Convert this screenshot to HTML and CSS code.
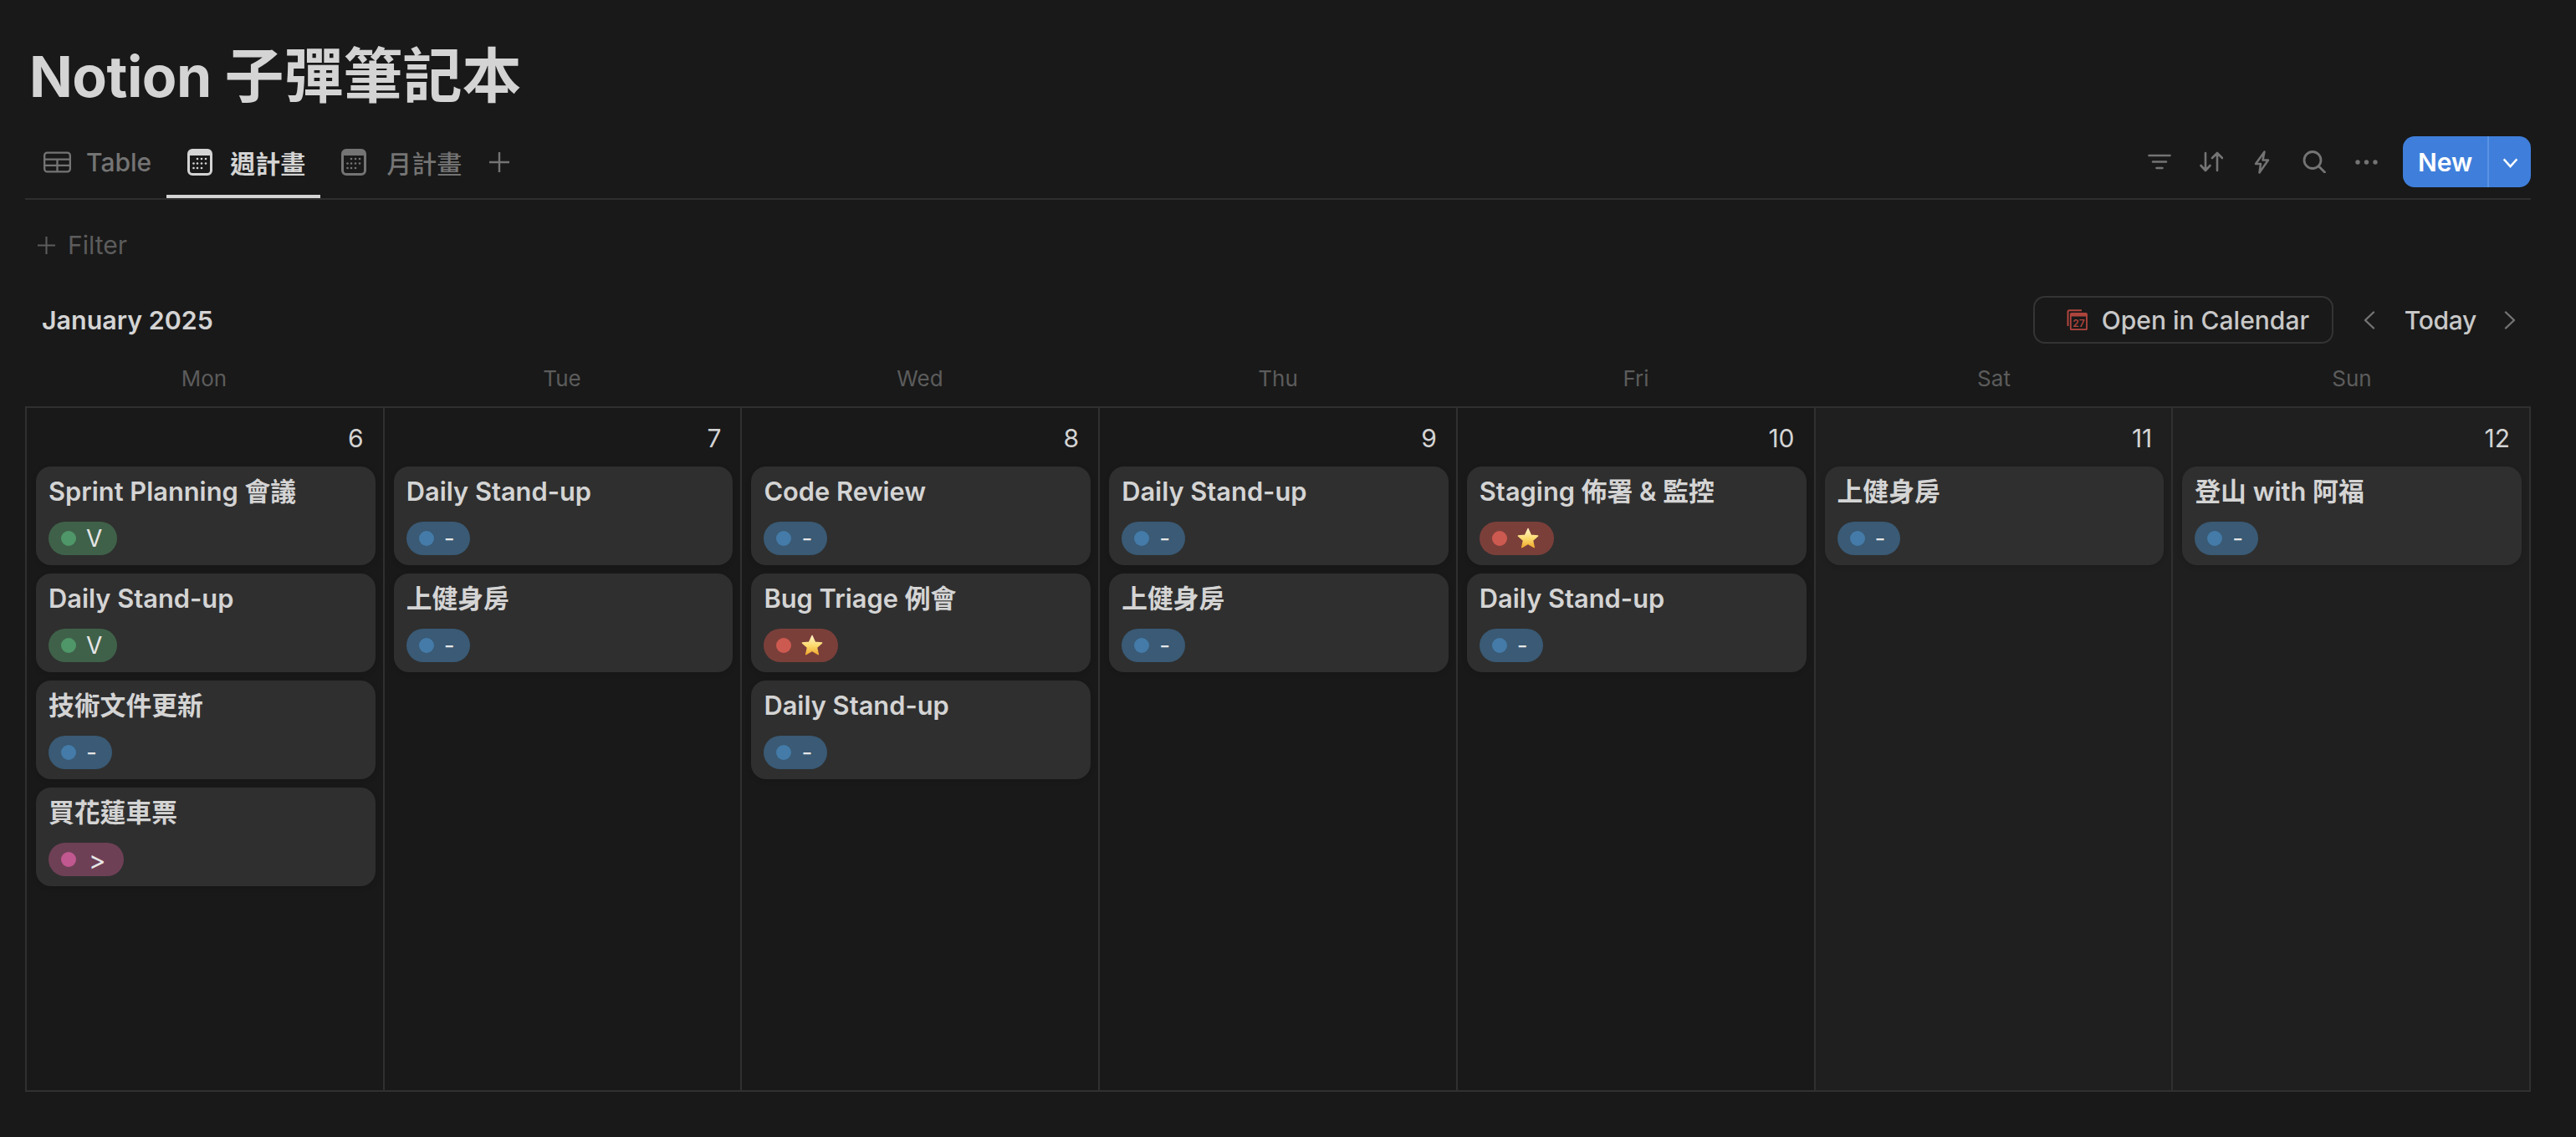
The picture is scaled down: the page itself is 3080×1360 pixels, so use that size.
FILE: index.html
```html
<!DOCTYPE html>
<html lang="zh-Hant">
<head>
<meta charset="utf-8">
<title>Notion 子彈筆記本</title>
<link rel="stylesheet" href="styles.css">
</head>
<body>
<svg width="0" height="0" class="defs">
  <defs>
    <linearGradient id="stargrad" x1="0" y1="0" x2="0" y2="1">
      <stop offset="0" stop-color="#fff3c4"/>
      <stop offset="0.55" stop-color="#fbd96a"/>
      <stop offset="1" stop-color="#f0a830"/>
    </linearGradient>
    <symbol id="star" viewBox="0 0 26 26">
      <path d="M13 1.500l3.400 7.600 8.300.9-6.200 5.500 1.800 8.200L13 19.500l-7.300 4.200 1.800-8.200L1.300 10l8.300-.9z" fill="url(#stargrad)" stroke="url(#stargrad)" stroke-width="1.400" stroke-linejoin="round"/>
    </symbol>
    <symbol id="cal" viewBox="0 0 30 32">
      <path fill-rule="evenodd" d="M6 0h18a6 6 0 0 1 6 6v20a6 6 0 0 1-6 6H6a6 6 0 0 1-6-6V6a6 6 0 0 1 6-6zM3 8v18a3 3 0 0 0 3 3h18a3 3 0 0 0 3-3V8z" fill="currentColor"/>
      <g fill="currentColor">
        <circle cx="12" cy="12" r="1.300"/><circle cx="17" cy="12" r="1.300"/><circle cx="22" cy="12" r="1.300"/>
        <circle cx="7.500" cy="17.500" r="1.300"/><circle cx="12" cy="17.500" r="1.300"/><circle cx="17" cy="17.500" r="1.300"/><circle cx="22" cy="17.500" r="1.300"/>
        <circle cx="7.500" cy="23" r="1.300"/><circle cx="12" cy="23" r="1.300"/><circle cx="17" cy="23" r="1.300"/>
      </g>
    </symbol>
  </defs>
</svg>
<main class="page">
  <h1 class="title">Notion <span class="title-cjk">子彈筆記本</span></h1>

  <nav class="viewbar">
    <div class="tabs">
      <div class="tab tab-table">
        <svg class="ico-table" width="33" height="26" viewBox="0 0 34 26" fill="none" stroke="currentColor" stroke-width="2.400"><rect x="1.200" y="1.200" width="31.600" height="23.600" rx="3.500"/><path d="M1 9.500h32M1 17h32M17 9.500V25"/></svg>
        <span>Table</span>
      </div>
      <div class="tab tab-active">
        <svg width="30" height="32" class="ico-cal"><use href="#cal"/></svg>
        <span>週計畫</span>
      </div>
      <div class="tab tab-month">
        <svg width="30" height="32" class="ico-cal"><use href="#cal"/></svg>
        <span>月計畫</span>
      </div>
      <svg class="tab-add" width="24" height="24" viewBox="0 0 24 24" fill="none" stroke="currentColor" stroke-width="2.400"><path d="M12 0v24M0 12h24"/></svg>
    </div>
    <div class="tools">
      <svg width="28" height="19" viewBox="0 0 28 19" fill="none" stroke="currentColor" stroke-width="2.600" stroke-linecap="round"><path d="M1.500 2h25M6 9.500h16M10.500 17h7"/></svg>
      <svg class="tool-sort" width="28" height="25" viewBox="0 0 28 25" fill="none" stroke="currentColor" stroke-width="2.600" stroke-linecap="round" stroke-linejoin="round"><path d="M7 2v21M1.500 17L7 23l5.500-6M21 23V2M15 8l6-6 6 6"/></svg>
      <svg class="tool-bolt" width="19" height="28" viewBox="0 0 19 28" fill="none" stroke="currentColor" stroke-width="2.500" stroke-linejoin="round"><path d="M12.500 1.500L2 16h6L6.500 26.500 17 11.500h-6.500z"/></svg>
      <svg class="tool-search" width="28" height="27" viewBox="0 0 28 27" fill="none" stroke="currentColor" stroke-width="2.800" stroke-linecap="round"><circle cx="12" cy="11.500" r="10"/><path d="M19.500 19l7 7"/></svg>
      <svg class="tool-dots" width="27" height="6" viewBox="0 0 27 6" fill="currentColor"><circle cx="3" cy="3" r="2.700"/><circle cx="13.500" cy="3" r="2.700"/><circle cx="24" cy="3" r="2.700"/></svg>
      <div class="newbtn">
        <span class="new-label">New</span>
        <span class="new-arrow"><svg width="19" height="12" viewBox="0 0 20 13" fill="none" stroke="#fff" stroke-width="2.600"><path d="M1.500 1.500L10 11l8.500-9.500"/></svg></span>
      </div>
    </div>
  </nav>

  <div class="filter">
    <svg width="21" height="21" viewBox="0 0 22 22" fill="none" stroke="currentColor" stroke-width="2.200"><path d="M11 0v22M0 11h22"/></svg>
    <span>Filter</span>
  </div>

  <header class="calhead">
    <div class="month">January 2025</div>
    <div class="calnav">
      <div class="opencal">
        <svg class="gcal" width="25" height="25" viewBox="0 0 25 25" fill="none" stroke="#b0453e"><path d="M1.500 20V2.800A1.500 1.500 0 0 1 3 1.300h15" stroke-width="2"/><rect x="4.800" y="4.800" width="19.200" height="19.400" rx="1" stroke-width="1.800"/><path d="M4.800 6.800h19.200" stroke-width="3.400"/><text x="14.400" y="21" text-anchor="middle" class="gcal-num">27</text></svg>
        <span>Open in Calendar</span>
      </div>
      <svg class="chev chev-prev" width="14" height="22" viewBox="0 0 14 22" fill="none" stroke="currentColor" stroke-width="2.400" stroke-linecap="round" stroke-linejoin="round"><path d="M12 1.500L2 11l10 9.500"/></svg>
      <span class="today">Today</span>
      <svg class="chev chev-next" width="14" height="22" viewBox="0 0 14 22" fill="none" stroke="currentColor" stroke-width="2.400" stroke-linecap="round" stroke-linejoin="round"><path d="M2 1.500L12 11 2 20.500"/></svg>
    </div>
  </header>

  <div class="weekdays">
    <div>Mon</div><div>Tue</div><div>Wed</div><div>Thu</div><div>Fri</div><div>Sat</div><div>Sun</div>
  </div>

  <section class="grid">
    <div class="cell">
      <div class="date">6</div>
      <article class="card"><div class="card-title">Sprint Planning 會議</div><span class="pill green"><i></i>V</span></article>
      <article class="card"><div class="card-title">Daily Stand-up</div><span class="pill green"><i></i>V</span></article>
      <article class="card"><div class="card-title">技術文件更新</div><span class="pill blue"><i></i>-</span></article>
      <article class="card"><div class="card-title">買花蓮車票</div><span class="pill pink"><i></i>&gt;</span></article>
    </div>
    <div class="cell">
      <div class="date">7</div>
      <article class="card"><div class="card-title">Daily Stand-up</div><span class="pill blue"><i></i>-</span></article>
      <article class="card"><div class="card-title">上健身房</div><span class="pill blue"><i></i>-</span></article>
    </div>
    <div class="cell">
      <div class="date">8</div>
      <article class="card"><div class="card-title">Code Review</div><span class="pill blue"><i></i>-</span></article>
      <article class="card"><div class="card-title">Bug Triage 例會</div><span class="pill red"><i></i><svg width="26" height="26"><use href="#star"/></svg></span></article>
      <article class="card"><div class="card-title">Daily Stand-up</div><span class="pill blue"><i></i>-</span></article>
    </div>
    <div class="cell">
      <div class="date">9</div>
      <article class="card"><div class="card-title">Daily Stand-up</div><span class="pill blue"><i></i>-</span></article>
      <article class="card"><div class="card-title">上健身房</div><span class="pill blue"><i></i>-</span></article>
    </div>
    <div class="cell">
      <div class="date">10</div>
      <article class="card"><div class="card-title">Staging 佈署 &amp; 監控</div><span class="pill red"><i></i><svg width="26" height="26"><use href="#star"/></svg></span></article>
      <article class="card"><div class="card-title">Daily Stand-up</div><span class="pill blue"><i></i>-</span></article>
    </div>
    <div class="cell weekend">
      <div class="date">11</div>
      <article class="card"><div class="card-title">上健身房</div><span class="pill blue"><i></i>-</span></article>
    </div>
    <div class="cell weekend">
      <div class="date">12</div>
      <article class="card"><div class="card-title">登山 with 阿福</div><span class="pill blue"><i></i>-</span></article>
    </div>
  </section>
</main>
</body>
</html>
```
FILE: styles.css
```css
* { box-sizing: border-box; }
html, body { margin: 0; height: 100%; }
body {
  background: #191919;
  color: #d4d4d4;
  font-family: Inter, "Noto Sans CJK TC", sans-serif;
  overflow: hidden;
}
.defs { position: absolute; }
.page { padding: 48px 54px 0 30px; }
.title {
  margin: 0 0 0 5px;
  height: 84px;
  font-size: 68px;
  line-height: 84px;
  font-weight: 700;
  letter-spacing: -0.5px;
  color: #d4d4d4;
}
.title-cjk { font-size: 71px; letter-spacing: 0; }
.viewbar {
  margin-top: 27px;
  height: 80px;
  display: flex;
  justify-content: space-between;
  border-bottom: 2px solid #2e2e2e;
}
.tabs { display: flex; align-items: stretch; }
.tab {
  display: flex;
  align-items: center;
  font-size: 30px;
  font-weight: 500;
  color: #747474;
  height: 78px;
}
.tab-table { padding: 0 18px 8px 22px; gap: 18px; }
.tab-active { padding: 0 18px 8px 25px; gap: 21px; color: #d4d4d4; box-shadow: inset 0 -4px 0 #d4d4d4; font-weight: 600; }
.tab-month { padding: 0 33px 8px 25px; gap: 24px; }
.ico-cal { display: block; }
.tab-add { color: #747474; align-self: center; margin-bottom: 8px; }
.tools {
  display: flex;
  align-items: center;
  padding-bottom: 9px;
  gap: 34px;
  color: #747474;
}
.tool-sort { margin-right: 3px; }
.tool-bolt { margin-right: 5px; }
.tool-search { margin-right: 1px; }
.tool-dots { margin-right: -4px; }
.newbtn {
  display: flex;
  width: 153px;
  height: 61px;
  background: #3f7fdb;
  border-radius: 14px;
  color: #fff;
  font-size: 30px;
  font-weight: 600;
}
.new-label { width: 101px; display: flex; align-items: center; justify-content: center; }
.new-arrow { flex: 1; display: flex; align-items: center; justify-content: center; border-left: 2px solid #5b92e2; padding-top: 3px; }
.filter {
  height: 108px;
  padding: 0 0 0 15px;
  display: flex;
  align-items: center;
  gap: 15px;
  font-size: 30px;
  color: #5c5c5c;
}
.calhead {
  margin-top: -2px;
  height: 75px;
  display: flex;
  align-items: center;
  justify-content: space-between;
}
.month { margin-left: 20px; font-size: 30.400px; font-weight: 600; color: #d4d4d4; }
.calnav { display: flex; align-items: center; color: #747474; }
.opencal {
  width: 359px;
  height: 57px;
  border: 2px solid #343434;
  border-radius: 14px;
  padding-left: 38px;
  display: flex;
  align-items: center;
  gap: 17px;
  font-size: 30px;
  font-weight: 500;
  color: #c8c8c8;
}
.gcal-num { font-size: 12px; font-weight: 600; fill: #b0453e; stroke: none; }
.chev-prev { margin-left: 36px; }
.chev-next { margin-right: 18px; }
.today { margin: 0 33px 0 35px; font-size: 30px; font-weight: 500; letter-spacing: -0.3px; color: #c8c8c8; }
.weekdays {
  height: 66px;
  display: grid;
  grid-template-columns: repeat(7, 1fr);
  align-items: center;
  text-align: center;
  font-size: 26px;
  color: #5c5c5c;
  padding-bottom: 2px;
}
.grid {
  height: 820px;
  display: grid;
  grid-template-columns: repeat(7, 1fr);
  border-top: 2px solid #303030;
  border-bottom: 2px solid #303030;
  border-right: 2px solid #303030;
}
.cell {
  border-left: 2px solid #303030;
  padding: 0 9px 0 11px;
  display: flex;
  flex-direction: column;
  gap: 10px;
}
.weekend { background: #1f1f1f; }
.date {
  height: 60px;
  padding: 18px 14px 0 0;
  line-height: 36px;
  text-align: right;
  font-size: 30px;
  color: #d4d4d4;
}
.card {
  height: 118px;
  padding: 12px 15px;
  background: #2f2f2f;
  border-radius: 18px;
  box-shadow: 0 2px 6px rgba(0,0,0,.12);
}
.card-title {
  height: 36px;
  line-height: 36px;
  margin-bottom: 18px;
  font-size: 30.800px;
  font-weight: 600;
  color: #d4d4d4;
  white-space: nowrap;
  overflow: hidden;
}
.pill {
  display: inline-flex;
  align-items: center;
  height: 40px;
  padding: 0 18px 0 15px;
  gap: 12px;
  border-radius: 20px;
  font-size: 28px;
  color: #e6e6e6;
  vertical-align: top;
}
.pill i { width: 18px; height: 18px; border-radius: 50%; flex: none; }
.pill svg { display: block; }
.green { background: #3f6149; }
.green i { background: #4f9768; }
.blue { background: #3a5a75; }
.blue i { background: #447ba8; }
.pink { background: #6e4056; gap: 15px; padding-right: 21px; font-size: 31px; }
.pink i { background: #c1588f; }
.red { background: #7b3f3a; }
.red i { background: #cd5a50; }
```
